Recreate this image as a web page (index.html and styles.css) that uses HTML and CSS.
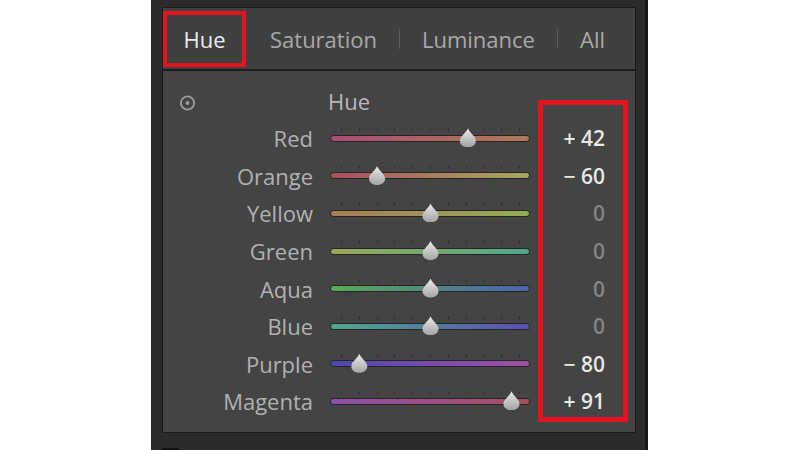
FILE: index.html
```html
<!DOCTYPE html>
<html lang="en">
<head>
    <meta charset="UTF-8">
    <meta name="viewport" content="width=device-width, initial-scale=1.0">
    <title>HSL Panel</title>
    <link rel="stylesheet" href="styles.css">
</head>
<body>
    <div class="frame">
        <div class="panel">
            <div class="tabs" role="tablist">
                <span class="tab active" role="tab">Hue</span>
                <span class="tab" role="tab">Saturation</span>
                <span class="sep"></span>
                <span class="tab" role="tab">Luminance</span>
                <span class="sep"></span>
                <span class="tab" role="tab">All</span>
            </div>
            <div class="content">
                <div class="grid">
                    <span class="target">
                        <svg width="18" height="18" viewBox="0 0 18 18">
                            <circle cx="9" cy="9" r="7" fill="none" stroke="#9c9c9c" stroke-width="2"/>
                            <circle cx="9" cy="9" r="2" fill="#9c9c9c"/>
                        </svg>
                    </span>
                    <span class="label"></span>
                    <span class="heading">Hue</span>
                    <span class="value"></span>

                    <span></span>
                    <span class="label">Red</span>
                    <div class="slider red">
                        <div class="ticks"><i></i><i></i><i></i><i></i><i></i><i></i><i></i><i></i><i></i><i></i><i></i></div>
                        <div class="track"></div>
                        <span class="thumb" style="--v: 42"></span>
                    </div>
                    <span class="value on">+ 42</span>

                    <span></span>
                    <span class="label">Orange</span>
                    <div class="slider orange">
                        <div class="ticks"><i></i><i></i><i></i><i></i><i></i><i></i><i></i><i></i><i></i><i></i><i></i></div>
                        <div class="track"></div>
                        <span class="thumb" style="--v: -60"></span>
                    </div>
                    <span class="value on">&minus; 60</span>

                    <span></span>
                    <span class="label">Yellow</span>
                    <div class="slider yellow">
                        <div class="ticks"><i></i><i></i><i></i><i></i><i></i><i></i><i></i><i></i><i></i><i></i><i></i></div>
                        <div class="track"></div>
                        <span class="thumb" style="--v: 0"></span>
                    </div>
                    <span class="value">0</span>

                    <span></span>
                    <span class="label">Green</span>
                    <div class="slider green">
                        <div class="ticks"><i></i><i></i><i></i><i></i><i></i><i></i><i></i><i></i><i></i><i></i><i></i></div>
                        <div class="track"></div>
                        <span class="thumb" style="--v: 0"></span>
                    </div>
                    <span class="value">0</span>

                    <span></span>
                    <span class="label">Aqua</span>
                    <div class="slider aqua">
                        <div class="ticks"><i></i><i></i><i></i><i></i><i></i><i></i><i></i><i></i><i></i><i></i><i></i></div>
                        <div class="track"></div>
                        <span class="thumb" style="--v: 0"></span>
                    </div>
                    <span class="value">0</span>

                    <span></span>
                    <span class="label">Blue</span>
                    <div class="slider blue">
                        <div class="ticks"><i></i><i></i><i></i><i></i><i></i><i></i><i></i><i></i><i></i><i></i><i></i></div>
                        <div class="track"></div>
                        <span class="thumb" style="--v: 0"></span>
                    </div>
                    <span class="value">0</span>

                    <span></span>
                    <span class="label">Purple</span>
                    <div class="slider purple">
                        <div class="ticks"><i></i><i></i><i></i><i></i><i></i><i></i><i></i><i></i><i></i><i></i><i></i></div>
                        <div class="track"></div>
                        <span class="thumb" style="--v: -80"></span>
                    </div>
                    <span class="value on">&minus; 80</span>

                    <span></span>
                    <span class="label">Magenta</span>
                    <div class="slider magenta">
                        <div class="ticks"><i></i><i></i><i></i><i></i><i></i><i></i><i></i><i></i><i></i><i></i><i></i></div>
                        <div class="track"></div>
                        <span class="thumb" style="--v: 91"></span>
                    </div>
                    <span class="value on">+ 91</span>
                </div>
                <div class="callout"></div>
            </div>
        </div>
        <div class="foot"><span class="nub"></span></div>
    </div>
</body>
</html>
```

FILE: styles.css
```css
body {
    margin: 0;
    padding: 0;
    background: #fff;
    font-family: "Open Sans", "Noto Sans", sans-serif;
}

.frame {
    width: 497px;
    height: 450px;
    margin-left: 151px;
    padding: 7px 0 0 11px;
    box-sizing: border-box;
    background: #2b2b2b;
    border-right: 3px solid #161616;
    display: flex;
    flex-direction: column;
}

.panel {
    width: 472px;
    border: 1px solid #1b1b1b;
    background: #444;
}

/* tab strip */
.tabs {
    height: 61px;
    display: flex;
    align-items: center;
    background: #404040;
    border-bottom: 2px solid #1d1d1d;
}

.tab {
    font-size: 22px;
    color: #a9a9a9;
    padding: 0 22px;
    line-height: 1;
}

.tab.active {
    width: 83px;
    height: 56px;
    box-sizing: border-box;
    padding: 0;
    margin-right: 2px;
    border: 4px solid #e2141c;
    color: #ececec;
    display: flex;
    align-items: center;
    justify-content: center;
}

.sep {
    width: 1px;
    height: 20px;
    background: #5c5c5c;
}

/* slider list */
.content {
    position: relative;
    height: 361px;
    box-sizing: border-box;
    padding: 11px 0 0 17px;
}

.grid {
    display: grid;
    grid-template-columns: 16px 134px 200px 75px;
    grid-auto-rows: 37.57px;
    align-items: center;
}

.target {
    display: flex;
    margin-top: 4px;
    margin-left: -1px;
}

.label {
    font-size: 22px;
    color: #b1b1b1;
    text-align: right;
    padding-right: 17px;
}

.heading {
    font-size: 22px;
    color: #b8b8b8;
    margin-left: -2px;
}

.value {
    font-size: 21px;
    font-weight: 600;
    color: #858585;
    text-align: right;
}

.value.on {
    color: #e8e8e8;
}

.slider {
    position: relative;
    height: 100%;
    display: flex;
    flex-direction: column;
    justify-content: center;
}

.ticks {
    height: 3px;
    margin: -6.5px 0 3.5px;
    padding: 0 10px 0 11px;
    display: flex;
    justify-content: space-between;
}

.ticks i {
    width: 1px;
    background: #2e2e2e;
}

.track {
    height: 7px;
    box-sizing: border-box;
    border: 1px solid #262626;
    border-radius: 4px;
}

.red .track { background: linear-gradient(to right, #a84e74, #b07a58); }
.orange .track { background: linear-gradient(to right, #a84f5c, #a8a862); }
.yellow .track { background: linear-gradient(to right, #ab7c55, #92ac58); }
.green .track { background: linear-gradient(to right, #9aa856, #4fa78c); }
.aqua .track { background: linear-gradient(to right, #5aab52, #4a62b0); }
.blue .track { background: linear-gradient(to right, #4fa98c, #5a4fb2); }
.purple .track { background: linear-gradient(to right, #4a48b2, #a350a6); }
.magenta .track { background: linear-gradient(to right, #9050ab, #a84e62); }

.thumb {
    position: absolute;
    top: calc(50% - 10px);
    left: calc(91.5px + var(--v) * 0.89px);
    width: 18px;
    height: 19px;
    background: linear-gradient(#ebebeb, #a4a4a4);
    clip-path: path("M9 0 C11 5 17 8 17 12.5 C17 16.5 13.5 19 9 19 C4.5 19 1 16.5 1 12.5 C1 8 7 5 9 0 Z");
}

.callout {
    position: absolute;
    left: 375px;
    top: 29px;
    width: 90px;
    height: 322px;
    box-sizing: border-box;
    border: 5px solid #e2141c;
}

.foot {
    flex: 1;
}

.nub {
    display: block;
    width: 17px;
    height: 3px;
    margin-top: 15px;
    background: #111;
}
```
